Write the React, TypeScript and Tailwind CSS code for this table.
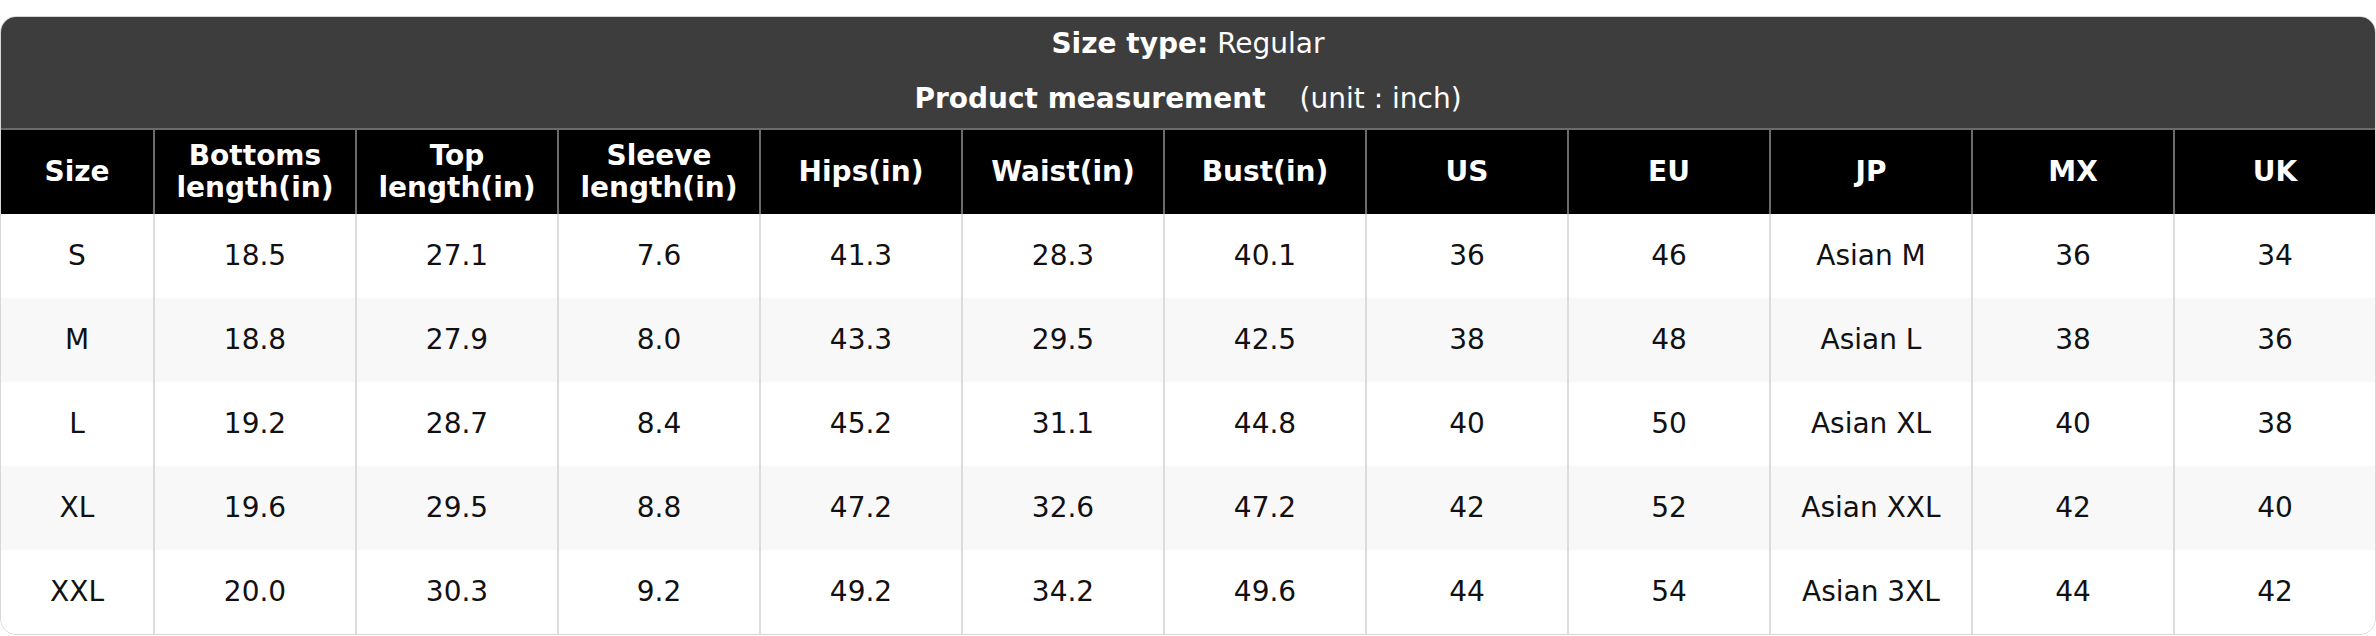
import React from "react";

const headers: string[][] = [
  ["Size"],
  ["Bottoms", "length(in)"],
  ["Top", "length(in)"],
  ["Sleeve", "length(in)"],
  ["Hips(in)"],
  ["Waist(in)"],
  ["Bust(in)"],
  ["US"],
  ["EU"],
  ["JP"],
  ["MX"],
  ["UK"],
];

const rows: string[][] = [
  ["S", "18.5", "27.1", "7.6", "41.3", "28.3", "40.1", "36", "46", "Asian M", "36", "34"],
  ["M", "18.8", "27.9", "8.0", "43.3", "29.5", "42.5", "38", "48", "Asian L", "38", "36"],
  ["L", "19.2", "28.7", "8.4", "45.2", "31.1", "44.8", "40", "50", "Asian XL", "40", "38"],
  ["XL", "19.6", "29.5", "8.8", "47.2", "32.6", "47.2", "42", "52", "Asian XXL", "42", "40"],
  ["XXL", "20.0", "30.3", "9.2", "49.2", "34.2", "49.6", "44", "54", "Asian 3XL", "44", "42"],
];

export default function App() {
  return (
    <div className="w-[2376px] bg-white pt-[16px] font-['DejaVu_Sans',sans-serif]">
      <div className="overflow-hidden rounded-[16px] border border-[#d6d6d6]">
        <div className="flex h-[111px] flex-col bg-[#3d3d3d] text-white">
          <div className="flex h-[53px] items-center justify-center text-[28px] leading-[32px]">
            <span className="font-bold">Size type:</span>
            <span className="ml-[9px]">Regular</span>
          </div>
          <div className="flex h-[58px] items-center justify-center text-[28px] leading-[32px]">
            <span className="font-bold">Product measurement</span>
            <span className="ml-[34px]">(unit : inch)</span>
          </div>
        </div>
        <div className="grid h-[86px] grid-cols-[152px_repeat(11,1fr)] border-t-2 border-[#6b6b6b] bg-black text-white">
          {headers.map((h, i) => (
            <div
              key={i}
              className={
                "flex flex-col items-center justify-center text-center text-[28px] font-bold leading-[32px] " +
                (i > 0 ? "border-l-2 border-[#6b6b6b]" : "")
              }
            >
              {h.map((line, j) => (
                <span key={j}>{line}</span>
              ))}
            </div>
          ))}
        </div>
        {rows.map((r, ri) => (
          <div
            key={ri}
            className={
              "grid h-[84px] grid-cols-[152px_repeat(11,1fr)] text-[#111] " +
              (ri % 2 === 1 ? "bg-[#f8f8f8]" : "bg-white")
            }
          >
            {r.map((c, ci) => (
              <div
                key={ci}
                className={
                  "flex items-center justify-center text-[28px] " +
                  (ci > 0 ? "border-l-2 border-[#dcdcdc]" : "")
                }
              >
                {c}
              </div>
            ))}
          </div>
        ))}
      </div>
    </div>
  );
}
